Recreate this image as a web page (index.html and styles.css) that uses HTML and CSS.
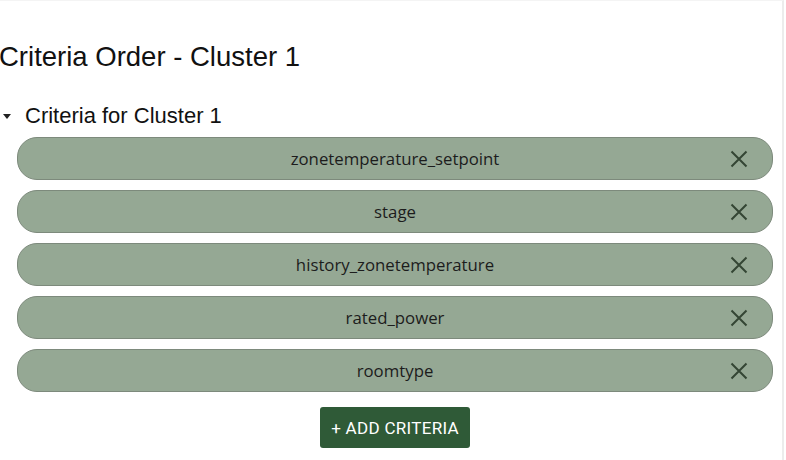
FILE: index.html
```html
<!DOCTYPE html>
<html>
<head>
<meta charset="utf-8">
<link rel="stylesheet" href="styles.css">
</head>
<body>
<div class="page">
  <h1 class="title">Criteria Order - Cluster 1</h1>
  <details class="group" open>
    <summary class="group-head">Criteria for Cluster 1</summary>
    <ul class="list">
      <li class="pill"><span class="pill-text">zonetemperature_setpoint</span><button class="remove" aria-label="Remove"><svg viewBox="0 0 24 24" width="24" height="24"><path d="M4.5 4.5L19.5 19.5M19.5 4.5L4.5 19.5" /></svg></button></li>
      <li class="pill"><span class="pill-text">stage</span><button class="remove" aria-label="Remove"><svg viewBox="0 0 24 24" width="24" height="24"><path d="M4.5 4.5L19.5 19.5M19.5 4.5L4.5 19.5" /></svg></button></li>
      <li class="pill"><span class="pill-text">history_zonetemperature</span><button class="remove" aria-label="Remove"><svg viewBox="0 0 24 24" width="24" height="24"><path d="M4.5 4.5L19.5 19.5M19.5 4.5L4.5 19.5" /></svg></button></li>
      <li class="pill"><span class="pill-text">rated_power</span><button class="remove" aria-label="Remove"><svg viewBox="0 0 24 24" width="24" height="24"><path d="M4.5 4.5L19.5 19.5M19.5 4.5L4.5 19.5" /></svg></button></li>
      <li class="pill"><span class="pill-text">roomtype</span><button class="remove" aria-label="Remove"><svg viewBox="0 0 24 24" width="24" height="24"><path d="M4.5 4.5L19.5 19.5M19.5 4.5L4.5 19.5" /></svg></button></li>
    </ul>
    <div class="actions">
      <button class="add-btn">+ ADD CRITERIA</button>
    </div>
  </details>
</div>
</body>
</html>
```

FILE: styles.css
```css
html, body {
  margin: 0;
  padding: 0;
  background: #fff;
}
.page {
  width: 784px;
  height: 460px;
  box-sizing: border-box;
  border-right: 2px solid #ececec;
  border-top: 1px solid #f4f4f4;
  overflow: hidden;
  font-family: "Liberation Sans", Arial, sans-serif;
  color: #111;
}
.title {
  margin: 39px 0 0 -1px;
  font-size: 27.5px;
  font-weight: 400;
  line-height: 34px;
}
.group {
  margin-top: 28px;
}
.group-head {
  font-size: 22px;
  line-height: 28px;
  padding-left: 3px;
  cursor: pointer;
  list-style: none;
  display: flex;
  align-items: center;
}
.group-head::-webkit-details-marker { display: none; }
.group-head::before {
  content: "";
  width: 0;
  height: 0;
  border-left: 4px solid transparent;
  border-right: 4px solid transparent;
  border-top: 5px solid #222;
  margin: 0 14px 0 0;
}
.list {
  list-style: none;
  margin: 7px 0 0 17px;
  padding: 0;
  width: 756px;
  display: flex;
  flex-direction: column;
  gap: 10px;
}
.pill {
  height: 43px;
  box-sizing: border-box;
  border: 1px solid #7d8a7c;
  border-radius: 20px;
  background: #95a894;
  display: flex;
  align-items: center;
  position: relative;
  font-family: "Open Sans", "Noto Sans", sans-serif;
  font-size: 16.8px;
  color: #1c1c1c;
}
.pill-text {
  flex: 1;
  text-align: center;
}
.remove {
  position: absolute;
  right: 21px;
  top: 50%;
  transform: translateY(-50%);
  background: none;
  border: 0;
  padding: 0;
  width: 24px;
  height: 24px;
  display: flex;
}
.remove svg path {
  stroke: #344634;
  stroke-width: 2;
  fill: none;
}
.actions {
  display: flex;
  justify-content: center;
  margin: 15px 0 0 17px;
  width: 756px;
}
.add-btn {
  width: 150px;
  height: 41px;
  background: #2f5a37;
  color: #fff;
  border: 0;
  border-radius: 3px;
  font-family: Roboto, sans-serif;
  font-size: 17px;
  letter-spacing: 0.3px;
}
```
